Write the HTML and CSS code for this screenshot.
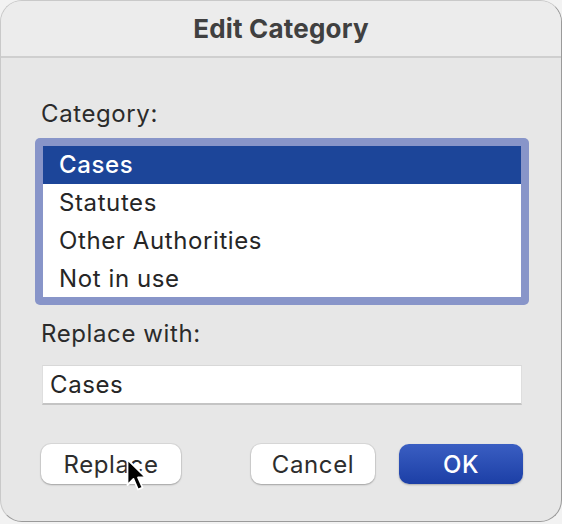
FILE: index.html
```html
<!DOCTYPE html>
<html lang="en">
<head>
<meta charset="utf-8">
<title>Edit Category</title>
<link rel="stylesheet" href="styles.css">
</head>
<body>
<div class="dialog">
  <header class="titlebar">
    <h1 class="title">Edit Category</h1>
  </header>
  <main class="content">
    <div class="label label-category">Category:</div>
    <div class="listbox-ring">
      <ul class="listbox">
        <li class="item selected">Cases</li>
        <li class="item">Statutes</li>
        <li class="item">Other Authorities</li>
        <li class="item">Not in use</li>
      </ul>
    </div>
    <div class="label label-replace">Replace with:</div>
    <div class="field">Cases</div>
    <div class="buttons">
      <button class="btn btn-replace">Replace</button>
      <div class="btn-group">
        <button class="btn btn-cancel">Cancel</button>
        <button class="btn btn-ok">OK</button>
      </div>
    </div>
  </main>
  <svg class="cursor" width="24" height="36" viewBox="0 0 24 36">
    <path d="M1.5 1.5 L1.5 27 L7.5 21 L12 31.5 L16.5 29.5 L12 19.5 L20 19.5 Z" fill="#000" stroke="#fff" stroke-width="1.8" stroke-linejoin="round"/>
  </svg>
</div>
</body>
</html>
```
FILE: styles.css
```css
* { box-sizing: border-box; }
html, body {
  margin: 0;
  padding: 0;
  background: #f2f2f2;
}
body {
  width: 562px;
  height: 524px;
  overflow: hidden;
  font-family: Inter, "Liberation Sans", sans-serif;
}
.dialog {
  position: relative;
  width: 562px;
  height: 522px;
  background: #e7e7e7;
  border-radius: 22px;
  border: 1px solid #c9c9c9;
  border-right-color: #9a9a9a;
  border-bottom-color: #9a9a9a;
  overflow: hidden;
  display: flex;
  flex-direction: column;
}
.titlebar {
  height: 57px;
  background: #ececec;
  border-bottom: 2px solid #cfcfcf;
  display: flex;
  align-items: center;
  justify-content: center;
}
.title {
  margin: 0;
  font-size: 26px;
  font-weight: 700;
  color: #404040;
  letter-spacing: 0.2px;
}
.content {
  padding: 41px 40px 0 40px;
  display: flex;
  flex-direction: column;
}
.label {
  font-size: 24px;
  line-height: 29px;
  color: #2b2b2b;
  letter-spacing: 0.6px;
}
.label-category {
  margin-bottom: 10px;
}
.listbox-ring {
  margin-left: -6px;
  width: 494px;
  height: 167px;
  padding: 8px;
  background: #8895c9;
  border-radius: 5px;
}
.listbox {
  list-style: none;
  margin: 0;
  padding: 0;
  background: #ffffff;
  height: 151px;
}
.item {
  height: 38px;
  line-height: 38px;
  padding-left: 16px;
  font-size: 24px;
  letter-spacing: 0.6px;
  color: #262626;
}
.item.selected {
  background: #1c4599;
  color: #ffffff;
  font-weight: 500;
}
.label-replace {
  margin-top: 14px;
}
.field {
  margin-top: 17px;
  width: 480px;
  height: 40px;
  margin-left: 1px;
  background: #ffffff;
  border-top: 1px solid #d8d8d8;
  border-left: 1px solid #dedede;
  border-right: 1px solid #dedede;
  border-bottom: 2px solid #c4c4c4;
  font-size: 24px;
  letter-spacing: 0.6px;
  line-height: 37px;
  padding-left: 7px;
  color: #262626;
}
.buttons {
  margin-top: 39px;
  display: flex;
  justify-content: space-between;
  width: 482px;
}
.btn-group {
  display: flex;
  gap: 24px;
}
.btn {
  height: 40px;
  border: none;
  border-radius: 10px;
  font-family: Inter, "Liberation Sans", sans-serif;
  font-size: 24px;
  letter-spacing: 0.6px;
  padding: 0;
  margin: 0;
}
.btn-replace, .btn-cancel {
  background: #ffffff;
  color: #2d2d2d;
  box-shadow: 0 0 0 1px rgba(0,0,0,0.06), 0 1px 2px rgba(0,0,0,0.25);
}
.btn-replace { width: 140px; }
.btn-cancel { width: 124px; }
.btn-ok {
  width: 124px;
  color: #ffffff;
  font-weight: 500;
  background: linear-gradient(#3a5ec2, #1c3fa6);
  box-shadow: 0 1px 2px rgba(0,0,0,0.25);
}
.cursor {
  position: absolute;
  left: 125px;
  top: 457px;
}
```
